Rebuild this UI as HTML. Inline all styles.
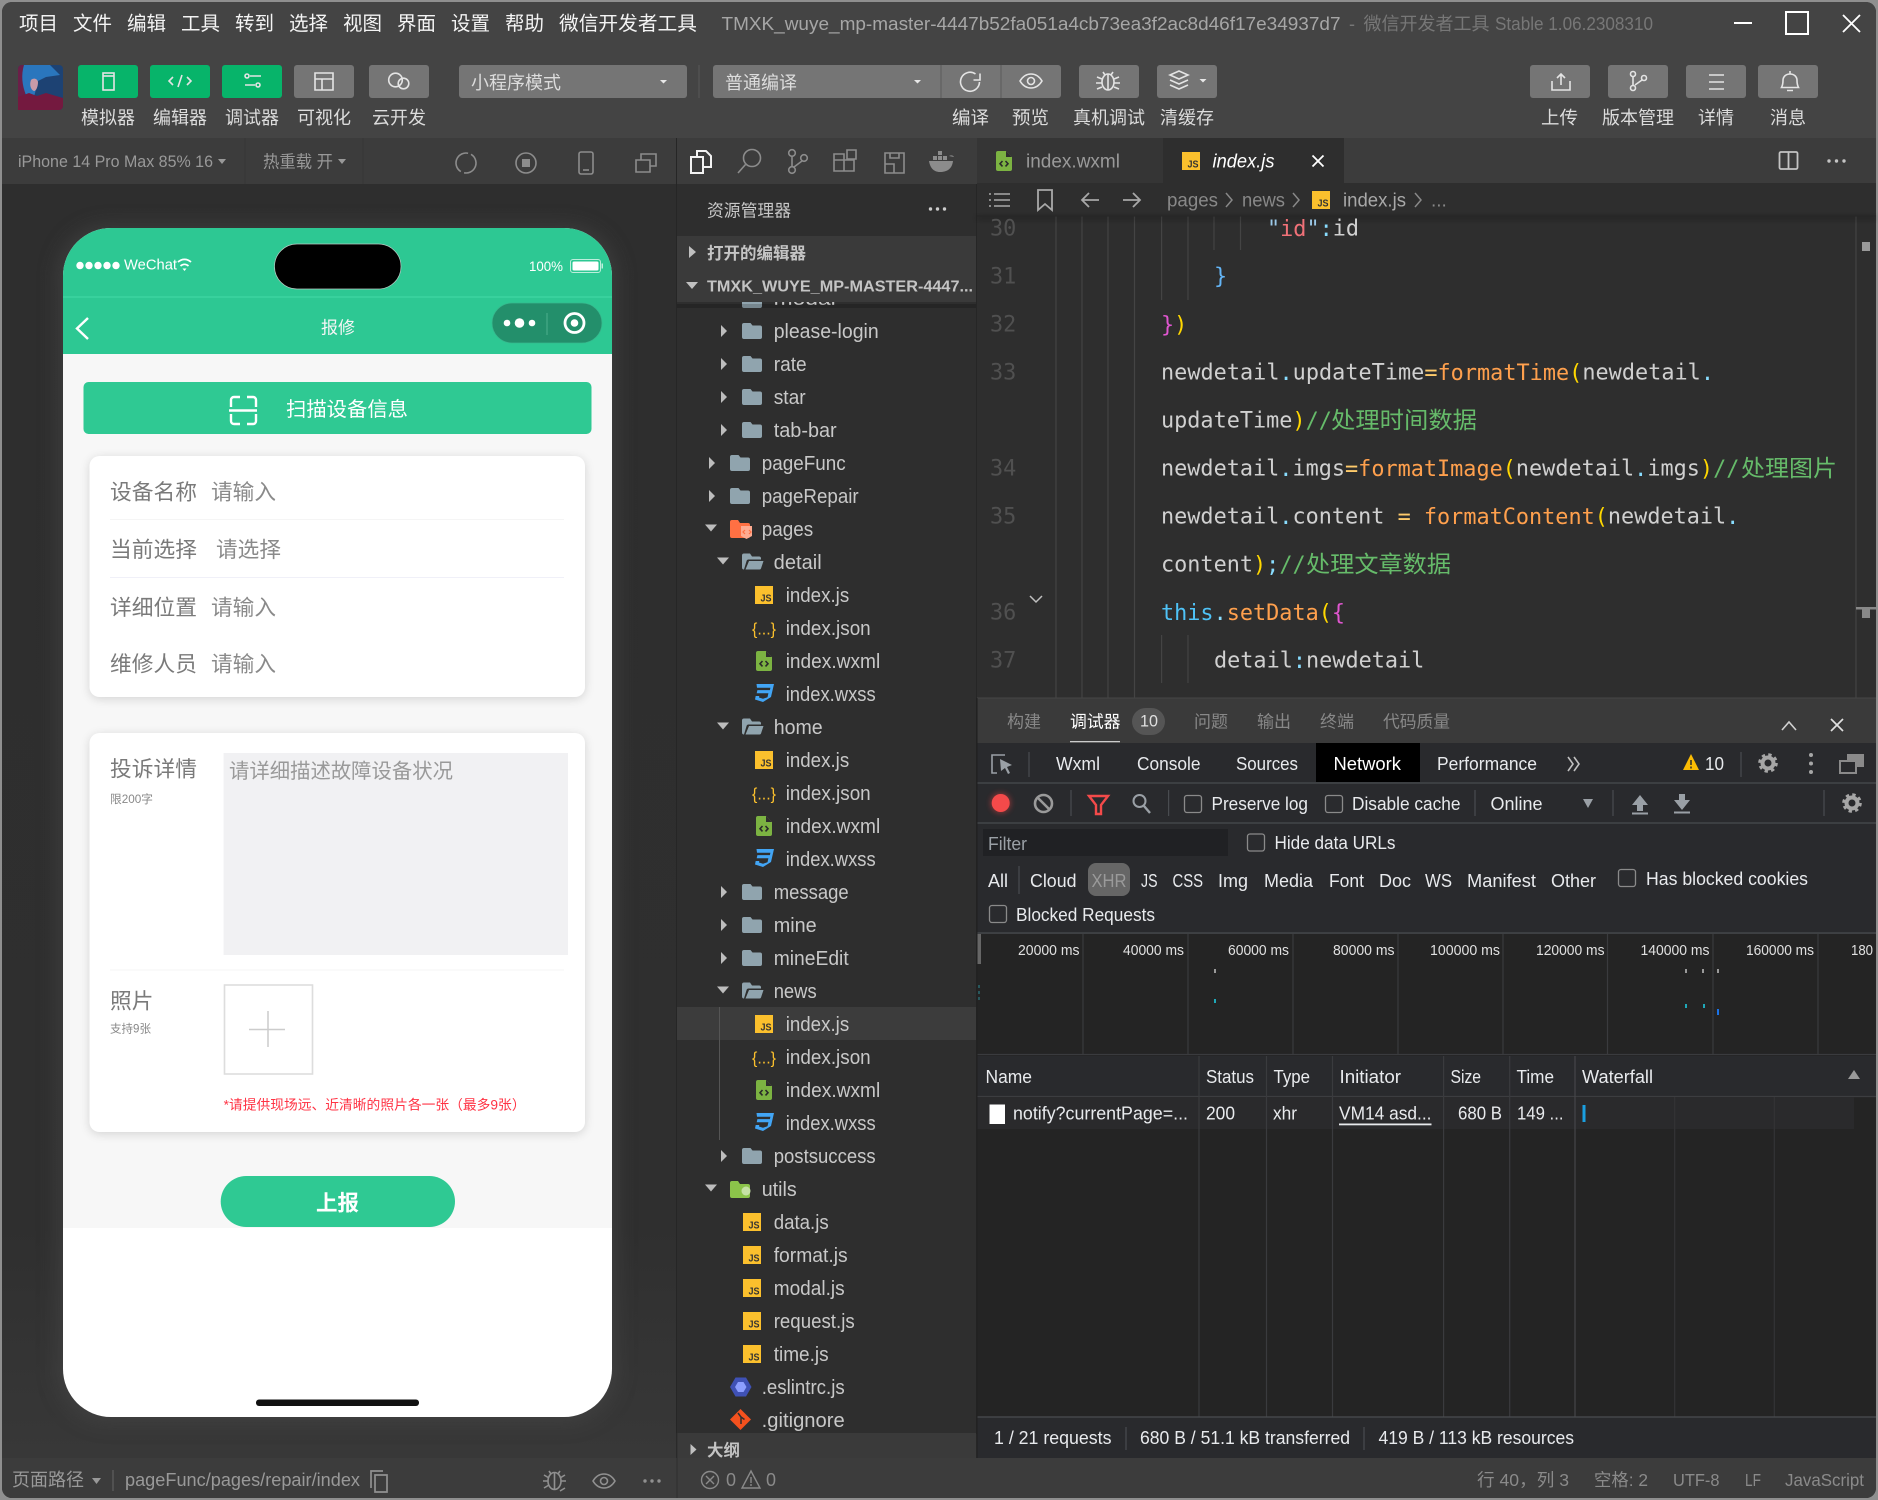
<!DOCTYPE html>
<html lang="zh-CN"><head><meta charset="utf-8"><title>微信开发者工具</title>
<style>
html,body{margin:0;padding:0;background:#8a8a8a;width:1878px;height:1500px;overflow:hidden}
svg{display:block}
text{font-family:"Liberation Sans","Noto Sans CJK SC",sans-serif;dominant-baseline:central;white-space:pre;transform:translateY(1px)}
.n,.n text,.d text{transform:none}
.m{font-family:"DejaVu Sans Mono","Liberation Mono",monospace;font-size:21.83px}
.cm{font-family:"Liberation Sans","Noto Sans CJK SC",sans-serif;font-size:23px;fill:#66bb6a}
.t{font-size:20px;fill:#c8c8c8}
.lb{font-size:18px;fill:#dcdcdc}
.d{font-size:18px;fill:#e8eaed}
.g{fill:none;stroke:#444;stroke-width:1.2}
.ic{fill:none;stroke:#e4e4e4;stroke-width:1.6}
.ig{fill:none;stroke:#8c8c8c;stroke-width:1.6}
.sep{stroke:#494c50;stroke-width:1.2}
.cb{fill:#2a2b2e;stroke:#8a8a8a;stroke-width:1.3}
</style></head><body>
<svg xmlns="http://www.w3.org/2000/svg" width="1878" height="1500" viewBox="0 0 1878 1500">
<defs>
<filter id="b1" x="-20%" y="-20%" width="140%" height="140%"><feGaussianBlur stdDeviation="10"/></filter>
<filter id="b2" x="-20%" y="-20%" width="140%" height="140%"><feGaussianBlur stdDeviation="5"/></filter>
<filter id="b3" x="-80%" y="-80%" width="260%" height="260%"><feGaussianBlur stdDeviation="3"/></filter>
<linearGradient id="simbg" x1="0" y1="0" x2="0" y2="1"><stop offset="0" stop-color="#2e2e2e"/><stop offset=".82" stop-color="#2f2f2f"/><stop offset="1" stop-color="#383838"/></linearGradient>
<g id="js"><rect width="18" height="18" fill="#fbc02d"/><text x="5.500" y="11.500" font-size="10.500" font-weight="700" fill="#333" textLength="11" lengthAdjust="spacingAndGlyphs">JS</text></g>
<g id="fc"><path fill="#90a4ae" d="M2 0h6.500l2 2.500H18a2 2 0 0 1 2 2V14a2 2 0 0 1-2 2H2a2 2 0 0 1-2-2V2a2 2 0 0 1 2-2z"/></g>
<g id="fo"><path fill="#90a4ae" d="M0 2a2 2 0 0 1 2-2h6l2 3h7a2 2 0 0 1 2 2v1H6.500a2 2 0 0 0-1.900 1.400L2 16a2 2 0 0 1-2-2zM7 7.500h14.500L19 15a1.500 1.500 0 0 1-1.400 1H3.500z"/></g>
<g id="wx"><path fill="#7cb342" d="M2 0h8l6 6v12a2 2 0 0 1-2 2H2a2 2 0 0 1-2-2V2a2 2 0 0 1 2-2z"/><path fill="#2e2e2e" d="M10 0l6 6h-6z"/><path fill="none" stroke="#2a2a2a" stroke-width="1.600" d="M6.500 10l-2.500 2.700 2.500 2.700M9.500 10l2.500 2.700-2.500 2.700"/></g>
<g id="ss"><path fill="#42a5f5" d="M2.500 0H20L17 13l-8 5-8-2.500.7-3.500h3.600l-.3 1.500 4 1.300 4.500-1.500.9-4H2.700l.7-3.200h12.500l.5-2.300H3z"/></g>
<g id="gear"><circle r="5.500" fill="none" stroke="#a6a6a6" stroke-width="4"/><circle r="8.300" fill="none" stroke="#a6a6a6" stroke-width="3" stroke-dasharray="3.300 3.220"/></g>
<g id="tr"><path fill="#bdbdbd" d="M-3-6l6 6-6 6z"/></g>
<g id="td"><path fill="#bdbdbd" d="M-6-3.500h12l-6 7z"/></g>
</defs>

<!-- window -->
<rect x="0" y="0" width="1878" height="1500" fill="#8f8f8f"/>
<rect x="2" y="2" width="1874" height="1496" rx="10" fill="#2e2e2e"/>
<path d="M2 138V12A10 10 0 0 1 12 2H1866a10 10 0 0 1 10 10V138z" fill="#444"/>

<!-- menu -->
<g fill="#f4f4f4">
<text x="19" y="23" font-size="19.500" textLength="39" lengthAdjust="spacingAndGlyphs">项目</text>
<text x="73" y="23" font-size="19.500" textLength="39" lengthAdjust="spacingAndGlyphs">文件</text>
<text x="127" y="23" font-size="19.500" textLength="39" lengthAdjust="spacingAndGlyphs">编辑</text>
<text x="181" y="23" font-size="19.500" textLength="39" lengthAdjust="spacingAndGlyphs">工具</text>
<text x="235" y="23" font-size="19.500" textLength="39" lengthAdjust="spacingAndGlyphs">转到</text>
<text x="289" y="23" font-size="19.500" textLength="39" lengthAdjust="spacingAndGlyphs">选择</text>
<text x="343" y="23" font-size="19.500" textLength="39" lengthAdjust="spacingAndGlyphs">视图</text>
<text x="397" y="23" font-size="19.500" textLength="39" lengthAdjust="spacingAndGlyphs">界面</text>
<text x="451" y="23" font-size="19.500" textLength="39" lengthAdjust="spacingAndGlyphs">设置</text>
<text x="505" y="23" font-size="19.500" textLength="39" lengthAdjust="spacingAndGlyphs">帮助</text>
<text x="559" y="23" font-size="19.500" textLength="138" lengthAdjust="spacingAndGlyphs">微信开发者工具</text>
</g>
<text x="721.500" y="23" font-size="18" fill="#a6a6a6" textLength="619" lengthAdjust="spacingAndGlyphs">TMXK_wuye_mp-master-4447b52fa051a4cb73ea3f2ac8d46f17e34937d7</text>
<text x="1349" y="23" font-size="18" fill="#777">-</text>
<text x="1363.500" y="23" font-size="18" fill="#777" textLength="126" lengthAdjust="spacingAndGlyphs">微信开发者工具</text>
<text x="1495" y="23" font-size="18" fill="#777" textLength="158" lengthAdjust="spacingAndGlyphs">Stable 1.06.2308310</text>
<path d="M1734 23h18" stroke="#fff" stroke-width="2"/>
<rect x="1786" y="12" width="22" height="22" fill="none" stroke="#fff" stroke-width="2"/>
<path d="M1843 15l17 17M1860 15l-17 17" stroke="#fff" stroke-width="1.800"/>

<!-- avatar -->
<rect x="18" y="65" width="45" height="45" rx="4" fill="#1d4273"/>
<path d="M18 110V69a4 4 0 0 1 4-4h3v45z" fill="#6b1f48"/>
<path d="M24 65h26l10 10-14 2-8 4-4 16-8-2c-4-10-5-20-2-30z" fill="#2a76bd"/>
<path d="M31 80c2-2 6-2 7 2 0 5-2 9-4 9-3-1-5-6-3-11z" fill="#c99aa8"/>
<path d="M18 110V97l11-4 8 3 9-3 17 5v8a4 4 0 0 1-4 4z" fill="#74193f"/>

<!-- left toolbar buttons -->
<g fill="#07b46a">
<rect x="78" y="65" width="60" height="33" rx="3"/>
<rect x="150" y="65" width="60" height="33" rx="3"/>
<rect x="222" y="65" width="60" height="33" rx="3"/>
</g>
<g fill="#757575">
<rect x="294" y="65" width="60" height="33" rx="3"/>
<rect x="369" y="65" width="60" height="33" rx="3"/>
<rect x="459" y="65" width="228" height="33" rx="3"/>
<rect x="713" y="65" width="348" height="33" rx="3"/>
<rect x="1079" y="65" width="60" height="33" rx="3"/>
<rect x="1157" y="65" width="60" height="33" rx="3"/>
<rect x="1530" y="65" width="60" height="33" rx="3"/>
<rect x="1608" y="65" width="60" height="33" rx="3"/>
<rect x="1686" y="65" width="60" height="33" rx="3"/>
<rect x="1758" y="65" width="60" height="33" rx="3"/>
</g>
<path d="M941 65v33M1001 65v33" stroke="#5c5c5c" stroke-width="1"/>
<path d="M699 65v33" stroke="#575757" stroke-width="1"/>
<!-- icons in buttons -->
<g class="ic">
<rect x="103" y="73" width="11" height="17" fill="none"/><path d="M103 76h11" fill="none"/>
<path d="M173 77l-4 4 4 4M187 77l4 4-4 4M182 75l-4 12" fill="none"/>
<g fill="none"><circle cx="247" cy="76" r="2"/><path d="M250 76h11M245 85h10"/><circle cx="258" cy="85" r="2"/></g>
<path d="M315 73h18v17h-18zM315 79h18M322 79v11" fill="none"/>
<g fill="none"><circle cx="395.500" cy="80" r="6.800"/><circle cx="403.500" cy="83.500" r="5.300"/></g>
<path fill="none" d="M975.500 74a9.500 9.500 0 1 0 4 8M980 73.500v6.500h-6.500"/>
<g fill="none"><path d="M1020 81c3-5 7-7 11-7s8 2 11 7c-3 5-7 7-11 7s-8-2-11-7z"/><circle cx="1031" cy="81" r="3.500"/></g>
<g fill="none"><ellipse cx="1108" cy="82" rx="6" ry="8"/><path d="M1108 74v16M1103 72l2 3M1113 72l-2 3M1097 77l5 2M1119 77l-5 2M1096 83h6M1120 83h-6M1097 89l5-2M1119 89l-5-2"/></g>
<path fill="none" d="M1170 75l9-4 9 4-9 4zM1170 80l9 4 9-4M1170 85l9 4 9-4"/>
<path fill="none" d="M1552 81v9h18v-9M1561 85V74M1557 78l4-4 4 4"/>
<g fill="none"><circle cx="1633" cy="74" r="2.500"/><circle cx="1633" cy="88" r="2.500"/><circle cx="1644" cy="78" r="2.500"/><path d="M1633 76.500v9M1642 80l-7 5"/></g>
<path fill="none" d="M1709 75h15M1709 82h15M1709 89h15"/>
<path fill="none" d="M1781.500 87.500c1-2 1.500-4 1.500-7 0-4 3-6.500 7-6.500s7 2.500 7 6.500c0 3 .5 5 1.500 7zM1790 71v3M1787 90.500h6"/>
</g>
<path d="M660 80h7l-3.500 3.500zM914 80h7l-3.500 3.500z" fill="#e8e8e8"/>
<path d="M1199.500 79h7l-3.500 3.500z" fill="#e8e8e8"/>
<text x="471" y="82" class="lb" textLength="90" lengthAdjust="spacingAndGlyphs">小程序模式</text>
<text x="725" y="82" class="lb" textLength="72" lengthAdjust="spacingAndGlyphs">普通编译</text>

<!-- labels -->
<g class="lb">
<text x="81" y="117" textLength="54" lengthAdjust="spacingAndGlyphs">模拟器</text>
<text x="153" y="117" textLength="54" lengthAdjust="spacingAndGlyphs">编辑器</text>
<text x="225" y="117" textLength="54" lengthAdjust="spacingAndGlyphs">调试器</text>
<text x="297" y="117" textLength="54" lengthAdjust="spacingAndGlyphs">可视化</text>
<text x="372" y="117" textLength="54" lengthAdjust="spacingAndGlyphs">云开发</text>
<text x="952" y="117" textLength="37" lengthAdjust="spacingAndGlyphs">编译</text>
<text x="1012" y="117" textLength="37" lengthAdjust="spacingAndGlyphs">预览</text>
<text x="1073" y="117" textLength="72" lengthAdjust="spacingAndGlyphs">真机调试</text>
<text x="1160" y="117" textLength="54" lengthAdjust="spacingAndGlyphs">清缓存</text>
<text x="1541" y="117" textLength="37" lengthAdjust="spacingAndGlyphs">上传</text>
<text x="1602" y="117" textLength="72" lengthAdjust="spacingAndGlyphs">版本管理</text>
<text x="1698" y="117" textLength="36" lengthAdjust="spacingAndGlyphs">详情</text>
<text x="1770" y="117" textLength="36" lengthAdjust="spacingAndGlyphs">消息</text>
</g>

<!-- simulator -->
<rect x="2" y="184" width="675" height="1274" fill="url(#simbg)"/>
<rect x="2" y="138" width="675" height="46" fill="#3c3c3c"/>
<path d="M245 138v46M363 138v46" stroke="#363636" stroke-width="1"/>
<text x="18" y="161" font-size="16.500" fill="#999" textLength="195" lengthAdjust="spacingAndGlyphs">iPhone 14 Pro Max 85% 16</text>
<path d="M218 159h8l-4 5zM338 159h8l-4 5z" fill="#999"/>
<text x="263" y="161" font-size="17" fill="#999" textLength="70" lengthAdjust="spacingAndGlyphs">热重载 开</text>
<g class="ig">
<circle cx="466" cy="163" r="10" fill="none" stroke-dasharray="27.900 3.500" transform="rotate(-60 466 163)"/>
<circle cx="526" cy="163" r="10" fill="none"/><rect x="522" y="159" width="8" height="8" fill="#8c8c8c" stroke="none"/>
<rect x="579" y="152" width="14" height="22" rx="2" fill="none"/><path d="M583 170h6" fill="none"/>
<path fill="none" d="M636 160h14v12h-14zM641 160v-6h15v12h-6"/>
</g>

<!-- phone -->
<rect x="58" y="226" width="558" height="1196" rx="50" fill="#4a4a4a" opacity=".55" filter="url(#b1)"/>
<rect x="63" y="228" width="549" height="1189" rx="48" fill="#fff"/>
<path d="M63 354V276a48 48 0 0 1 48-48H564a48 48 0 0 1 48 48V354z" fill="#2dc893"/>
<path d="M63 297h549" stroke="#3fd6a3" stroke-width="1.200"/>
<g fill="#fff"><circle cx="80" cy="265.500" r="3.700"/><circle cx="89" cy="265.500" r="3.700"/><circle cx="98" cy="265.500" r="3.700"/><circle cx="107" cy="265.500" r="3.700"/><circle cx="116" cy="265.500" r="3.700"/></g>
<text x="124" y="264" font-size="15" fill="#fff" textLength="53" lengthAdjust="spacingAndGlyphs">WeChat</text>
<path d="M178 262c4-3.500 9-3.500 13 0M180.500 266c2.500-2.200 5.500-2.200 8 0" fill="none" stroke="#fff" stroke-width="1.800"/><path d="M182.500 268.500h4L184.500 271z" fill="#fff"/>
<rect x="274.500" y="244" width="126.500" height="45" rx="22.500" fill="#000" stroke="#b8c9c2" stroke-width=".7"/>
<text x="529" y="265" font-size="14" fill="#fff" textLength="34" lengthAdjust="spacingAndGlyphs">100%</text>
<rect x="570.500" y="259.500" width="30" height="13" rx="2.500" fill="none" stroke="#bdeedc" stroke-width="1"/><rect x="572.500" y="261.500" width="26" height="9" rx="1.500" fill="#fff"/><rect x="601.500" y="263.500" width="1.500" height="5" fill="#bdeedc"/>
<path d="M88 318l-11 10.500L88 339" fill="none" stroke="#fff" stroke-width="2.400"/>
<text x="321" y="327" font-size="17" fill="#f6f6f6" textLength="34" lengthAdjust="spacingAndGlyphs">报修</text>
<rect x="492" y="303" width="110" height="40" rx="20" fill="#238f6b" stroke="#37b88d" stroke-width=".8"/>
<g fill="#fff"><circle cx="507" cy="323" r="3.300"/><circle cx="519.500" cy="323" r="4.800"/><circle cx="532" cy="323" r="3.300"/></g>
<path d="M547 313v22" stroke="#4caf8e" stroke-width="1"/>
<circle cx="574.500" cy="323" r="9.500" fill="none" stroke="#fff" stroke-width="2.800"/><circle cx="574.500" cy="323" r="3.800" fill="#fff"/>
<rect x="63" y="354" width="549" height="874" fill="#f7f7f7"/>
<rect x="83.500" y="382" width="508" height="52" rx="5" fill="#2fc993"/>
<path d="M231 407v-7a3 3 0 0 1 3-3h6M247 397h6a3 3 0 0 1 3 3v7M229 410.500h28M231 414v7a3 3 0 0 0 3 3h6M247 424h6a3 3 0 0 0 3-3v-7" fill="none" stroke="#fff" stroke-width="2.400"/>
<text x="286" y="409" font-size="20" fill="#fff" textLength="122" lengthAdjust="spacingAndGlyphs">扫描设备信息</text>

<rect x="89.500" y="458" width="495.500" height="241" rx="10" fill="#000" opacity=".14" filter="url(#b2)"/>
<rect x="89.500" y="456" width="495.500" height="241" rx="10" fill="#fff"/>
<g class="n" font-size="21.600" fill="#7a7a7a">
<text x="110" y="492" textLength="87" lengthAdjust="spacingAndGlyphs">设备名称</text>
<text x="110" y="549.500" textLength="87" lengthAdjust="spacingAndGlyphs">当前选择</text>
<text x="110" y="607.500" textLength="87" lengthAdjust="spacingAndGlyphs">详细位置</text>
<text x="110" y="664" textLength="87" lengthAdjust="spacingAndGlyphs">维修人员</text>
</g>
<g class="n" font-size="21.600" fill="#8a8a8a">
<text x="211" y="492" textLength="65" lengthAdjust="spacingAndGlyphs">请输入</text>
<text x="216" y="549.500" textLength="65" lengthAdjust="spacingAndGlyphs">请选择</text>
<text x="211" y="607.500" textLength="65" lengthAdjust="spacingAndGlyphs">请输入</text>
<text x="211" y="664" textLength="65" lengthAdjust="spacingAndGlyphs">请输入</text>
</g>
<path d="M110 519.500h454" stroke="#f5f5f5" stroke-width="1"/><path d="M110 577.500h454" stroke="#f0f0f8" stroke-width="1"/>

<rect x="89.500" y="735" width="495.500" height="399" rx="10" fill="#000" opacity=".14" filter="url(#b2)"/>
<rect x="89.500" y="733" width="495.500" height="399" rx="10" fill="#fff"/>
<text x="110" y="768" font-size="21.600" fill="#7a7a7a" textLength="87" lengthAdjust="spacingAndGlyphs">投诉详情</text>
<text x="110" y="799" font-size="11.500" fill="#888" textLength="43" lengthAdjust="spacingAndGlyphs">限200字</text>
<rect x="223.600" y="753" width="344.400" height="202" fill="#f1f1f3"/>
<text x="229" y="771" font-size="20.400" fill="#999" textLength="224" lengthAdjust="spacingAndGlyphs">请详细描述故障设备状况</text>
<path d="M110 970h454" stroke="#f5f5f5" stroke-width="1"/>
<text x="110" y="1000" font-size="21.600" fill="#7a7a7a" textLength="43.500" lengthAdjust="spacingAndGlyphs">照片</text>
<text x="110" y="1028.500" font-size="11.500" fill="#888" textLength="41" lengthAdjust="spacingAndGlyphs">支持9张</text>
<rect x="224.500" y="985" width="88" height="89" fill="#fff" stroke="#ddd" stroke-width="1.600"/>
<path d="M249 1029.500h36M268 1011v36" stroke="#ccc" stroke-width="1.500"/>
<text x="223.600" y="1104" font-size="13.600" fill="#ff3344" textLength="302" lengthAdjust="spacingAndGlyphs">*请提供现场远、近清晰的照片各一张（最多9张）</text>
<rect x="220.700" y="1176" width="234.300" height="51" rx="25.500" fill="#2fc993"/>
<text x="316" y="1202" font-size="21.600" font-weight="700" fill="#fff" textLength="43" lengthAdjust="spacingAndGlyphs">上报</text>
<rect x="256" y="1399.500" width="163" height="6.500" rx="3" fill="#111"/>

<!-- activity row -->
<rect x="677" y="138" width="300" height="46" fill="#3c3c3c"/>
<path d="M691 157h12v16h-12zM697 157v-6h9l5 5v11h-8" fill="none" stroke="#f2f2f2" stroke-width="2"/>
<g class="ig" stroke-width="1.800">
<circle cx="752" cy="158" r="8.500" fill="none"/><path d="M745.500 164.500l-7.500 8.500" fill="none"/>
<g fill="none"><circle cx="792" cy="153" r="3.300"/><circle cx="792" cy="170" r="3.300"/><circle cx="804" cy="158" r="3.300"/><path d="M792 156.500v10M802 161l-8 6"/></g>
<path fill="none" d="M834 160h10v11h-10zM844 160h10v11h-10zM834 160v-6h10v6M847 150h9v9h-9z"/>
<path fill="none" d="M885 153h19v20h-19zM885 164h9v9M890 153v5h9v-5"/>
</g>
<path d="M929 161h24c-1 8-6 11-13 11s-10-5-11-11z" fill="#8c8c8c"/><path d="M933 156h4v4h-4zM938 156h4v4h-4zM943 156h4v4h-4zM938 151h4v4h-4zM949 156c2-1 4-1 5 1" fill="#8c8c8c"/>

<!-- explorer -->
<rect x="677" y="184" width="300" height="1274" fill="#2e2e2e"/>
<path d="M676.500 138v1320" stroke="#262626" stroke-width="1"/>
<path d="M976.500 184v1250" stroke="#262626" stroke-width="1"/>
<text x="707" y="210" font-size="17" fill="#c8c8c8" textLength="84" lengthAdjust="spacingAndGlyphs">资源管理器</text>
<g fill="#ccc"><circle cx="930.500" cy="209" r="1.700"/><circle cx="937.500" cy="209" r="1.700"/><circle cx="944.500" cy="209" r="1.700"/></g>

<rect x="677" y="1007" width="299" height="33" fill="#3c3c3c"/>
<path d="M719.500 1007v133" stroke="#555" stroke-width="1"/>

<!-- tree rows -->
<use href="#fc" x="742" y="292"/><text x="773.700" y="298" class="t" textLength="62" lengthAdjust="spacingAndGlyphs">modal</text>
<use href="#tr" x="724" y="331"/><use href="#fc" x="742" y="323"/><text x="773.700" y="331" class="t" textLength="105" lengthAdjust="spacingAndGlyphs">please-login</text>
<use href="#tr" x="724" y="364"/><use href="#fc" x="742" y="356"/><text x="773.700" y="364" class="t" textLength="33" lengthAdjust="spacingAndGlyphs">rate</text>
<use href="#tr" x="724" y="397"/><use href="#fc" x="742" y="389"/><text x="773.700" y="397" class="t" textLength="32" lengthAdjust="spacingAndGlyphs">star</text>
<use href="#tr" x="724" y="430"/><use href="#fc" x="742" y="422"/><text x="773.700" y="430" class="t" textLength="63" lengthAdjust="spacingAndGlyphs">tab-bar</text>
<use href="#tr" x="712" y="463"/><use href="#fc" x="730" y="455"/><text x="761.700" y="463" class="t" textLength="84" lengthAdjust="spacingAndGlyphs">pageFunc</text>
<use href="#tr" x="712" y="496"/><use href="#fc" x="730" y="488"/><text x="761.700" y="496" class="t" textLength="97" lengthAdjust="spacingAndGlyphs">pageRepair</text>
<use href="#td" x="711" y="528"/>
<path fill="#ff7043" d="M730 522a2 2 0 0 1 2-2h6l2 3h8a2 2 0 0 1 2 2v11a2 2 0 0 1-2 2h-16a2 2 0 0 1-2-2z"/><path fill="#ffab91" d="M741 526h11v10l-5.500 3-5.500-3z"/><path fill="none" stroke="#ff7043" stroke-width="1.200" d="M745 530l-2 2 2 2M749 530l2 2-2 2"/>
<text x="761.700" y="529" class="t" textLength="51.500" lengthAdjust="spacingAndGlyphs">pages</text>

<use href="#td" x="723" y="561"/><use href="#fo" x="742" y="553.500"/><text x="773.700" y="562" class="t" textLength="48" lengthAdjust="spacingAndGlyphs">detail</text>
<use href="#js" x="755" y="586"/><text x="785.700" y="595" class="t" textLength="63.500" lengthAdjust="spacingAndGlyphs">index.js</text>
<text x="752" y="628" font-size="17" fill="#fbc02d" textLength="24" lengthAdjust="spacingAndGlyphs">{...}</text><text x="785.700" y="628" class="t" textLength="85" lengthAdjust="spacingAndGlyphs">index.json</text>
<use href="#wx" x="756" y="651"/><text x="785.700" y="661" class="t" textLength="94.500" lengthAdjust="spacingAndGlyphs">index.wxml</text>
<use href="#ss" x="754" y="684"/><text x="785.700" y="694" class="t" textLength="90" lengthAdjust="spacingAndGlyphs">index.wxss</text>

<use href="#td" x="723" y="726"/><use href="#fo" x="742" y="718.500"/><text x="773.700" y="727" class="t" textLength="49" lengthAdjust="spacingAndGlyphs">home</text>
<use href="#js" x="755" y="751"/><text x="785.700" y="760" class="t" textLength="63.500" lengthAdjust="spacingAndGlyphs">index.js</text>
<text x="752" y="793" font-size="17" fill="#fbc02d" textLength="24" lengthAdjust="spacingAndGlyphs">{...}</text><text x="785.700" y="793" class="t" textLength="85" lengthAdjust="spacingAndGlyphs">index.json</text>
<use href="#wx" x="756" y="816"/><text x="785.700" y="826" class="t" textLength="94.500" lengthAdjust="spacingAndGlyphs">index.wxml</text>
<use href="#ss" x="754" y="849"/><text x="785.700" y="859" class="t" textLength="90" lengthAdjust="spacingAndGlyphs">index.wxss</text>

<use href="#tr" x="724" y="892"/><use href="#fc" x="742" y="884"/><text x="773.700" y="892" class="t" textLength="75" lengthAdjust="spacingAndGlyphs">message</text>
<use href="#tr" x="724" y="925"/><use href="#fc" x="742" y="917"/><text x="773.700" y="925" class="t" textLength="43" lengthAdjust="spacingAndGlyphs">mine</text>
<use href="#tr" x="724" y="958"/><use href="#fc" x="742" y="950"/><text x="773.700" y="958" class="t" textLength="75" lengthAdjust="spacingAndGlyphs">mineEdit</text>
<use href="#td" x="723" y="990"/><use href="#fo" x="742" y="982.500"/><text x="773.700" y="991" class="t" textLength="43" lengthAdjust="spacingAndGlyphs">news</text>
<use href="#js" x="755" y="1015"/><text x="785.700" y="1024" class="t" textLength="63.500" lengthAdjust="spacingAndGlyphs">index.js</text>
<text x="752" y="1057" font-size="17" fill="#fbc02d" textLength="24" lengthAdjust="spacingAndGlyphs">{...}</text><text x="785.700" y="1057" class="t" textLength="85" lengthAdjust="spacingAndGlyphs">index.json</text>
<use href="#wx" x="756" y="1080"/><text x="785.700" y="1090" class="t" textLength="94.500" lengthAdjust="spacingAndGlyphs">index.wxml</text>
<use href="#ss" x="754" y="1113"/><text x="785.700" y="1123" class="t" textLength="90" lengthAdjust="spacingAndGlyphs">index.wxss</text>
<use href="#tr" x="724" y="1156"/><use href="#fc" x="742" y="1148"/><text x="773.700" y="1156" class="t" textLength="102" lengthAdjust="spacingAndGlyphs">postsuccess</text>

<use href="#td" x="711" y="1188"/>
<path fill="#8bc34a" d="M730 1183a2 2 0 0 1 2-2h6l2 3h8a2 2 0 0 1 2 2v10a2 2 0 0 1-2 2h-16a2 2 0 0 1-2-2z"/><circle cx="746" cy="1191" r="4.500" fill="#c5e1a5"/>
<text x="761.700" y="1189" class="t" textLength="35" lengthAdjust="spacingAndGlyphs">utils</text>
<use href="#js" x="743" y="1213"/><text x="773.700" y="1222" class="t" textLength="55" lengthAdjust="spacingAndGlyphs">data.js</text>
<use href="#js" x="743" y="1246"/><text x="773.700" y="1255" class="t" textLength="74" lengthAdjust="spacingAndGlyphs">format.js</text>
<use href="#js" x="743" y="1279"/><text x="773.700" y="1288" class="t" textLength="71" lengthAdjust="spacingAndGlyphs">modal.js</text>
<use href="#js" x="743" y="1312"/><text x="773.700" y="1321" class="t" textLength="81" lengthAdjust="spacingAndGlyphs">request.js</text>
<use href="#js" x="743" y="1345"/><text x="773.700" y="1354" class="t" textLength="55" lengthAdjust="spacingAndGlyphs">time.js</text>
<path fill="#3f51b5" d="M730 1387l5.500-9.500h10.500l5.500 9.500-5.500 9.500h-10.500z"/><path fill="#8c9eff" d="M735 1387l3-5h5.500l3 5-3 5h-5.500z"/>
<text x="761.700" y="1387" class="t" textLength="83" lengthAdjust="spacingAndGlyphs">.eslintrc.js</text>
<path fill="#f4511e" d="M740.500 1409l10.500 10.500-10.500 10.500-10.500-10.500z"/><path fill="none" stroke="#2e2e2e" stroke-width="1.500" d="M738 1413l3 4v7M741 1417l3.500 2.500"/>
<text x="761.700" y="1420" class="t" textLength="83" lengthAdjust="spacingAndGlyphs">.gitignore</text>

<!-- explorer sections (over tree) -->
<rect x="677" y="304" width="299" height="4" fill="#000" opacity=".18"/>
<rect x="677" y="236" width="299" height="34" fill="#3a3a3a"/>
<rect x="677" y="270" width="299" height="32" fill="#3a3a3a"/>
<path d="M689 246l7 6-7 6z" fill="#c0c0c0"/><path d="M686 282h12l-6 7z" fill="#c0c0c0"/>
<text x="707" y="253" font-size="16.500" font-weight="700" fill="#c4c4c4" textLength="99" lengthAdjust="spacingAndGlyphs">打开的编辑器</text>
<text x="707" y="286" font-size="16" font-weight="700" fill="#c4c4c4" textLength="266" lengthAdjust="spacingAndGlyphs">TMXK_WUYE_MP-MASTER-4447...</text>
<rect x="677" y="1433" width="299" height="25" fill="#3a3a3a"/>
<path d="M690.500 1444l6 5.500-6 5.500z" fill="#c0c0c0"/>
<text x="707" y="1450" font-size="16.500" font-weight="700" fill="#c4c4c4" textLength="33" lengthAdjust="spacingAndGlyphs">大纲</text>

<!-- editor tabs -->
<rect x="977" y="138" width="899" height="45" fill="#3c3c3c"/>
<rect x="977" y="138" width="186" height="45" fill="#353535"/>
<rect x="1163" y="138" width="181" height="45" fill="#2e2e2e"/>
<use href="#wx" transform="translate(996,151)"/>
<text x="1026" y="161" font-size="19" fill="#999" textLength="94" lengthAdjust="spacingAndGlyphs">index.wxml</text>
<use href="#js" x="1182" y="152"/>
<text x="1212.500" y="161" font-size="19" font-style="italic" fill="#fff" textLength="62" lengthAdjust="spacingAndGlyphs">index.js</text>
<path d="M1312.500 155.500l11 11M1323.500 155.500l-11 11" stroke="#fff" stroke-width="1.800"/>
<rect x="1779.500" y="152" width="18" height="17" rx="1.500" fill="none" stroke="#c4c4c4" stroke-width="1.800"/><path d="M1788.500 152v17" stroke="#c4c4c4" stroke-width="1.800"/>
<g fill="#c4c4c4"><circle cx="1829" cy="161" r="1.700"/><circle cx="1836.500" cy="161" r="1.700"/><circle cx="1844" cy="161" r="1.700"/></g>

<!-- code area -->
<rect x="977" y="183" width="899" height="515" fill="#2e2e2e"/>
<path d="M1056 216v482M1082 216v482M1108 216v482M1134.500 216v482M1161.600 216v84M1188 216v84M1214 216v34M1240.500 216v34M1161.600 635v48M1188 635v48M1856 216v482" class="g"/>
<rect x="977" y="183" width="899" height="33" fill="#2e2e2e"/>
<rect x="977" y="216" width="899" height="4" fill="#000" opacity=".22" filter="url(#b3)"/>
<path d="M977 216h899" stroke="#252525" stroke-width="1"/>
<!-- breadcrumbs -->
<g>
<path fill="none" stroke="#a8a8a8" stroke-width="1.600" d="M994 194h16M994 200h16M994 206h16M989 194h2M989 200h2M989 206h2"/>
<path fill="none" stroke="#a8a8a8" stroke-width="1.800" d="M1038 190h14v20l-7-6-7 6z"/>
<path fill="none" stroke="#a8a8a8" stroke-width="1.800" d="M1099 200h-17M1089 193l-7 7 7 7M1123 200h17M1133 193l7 7-7 7"/>
</g>
<text x="1167" y="200" font-size="19" fill="#888" textLength="51" lengthAdjust="spacingAndGlyphs">pages</text>
<path d="M1226 193l6 7-6 7M1293 193l6 7-6 7M1415 193l6 7-6 7" fill="none" stroke="#888" stroke-width="1.500"/>
<text x="1242" y="200" font-size="19" fill="#888" textLength="43" lengthAdjust="spacingAndGlyphs">news</text>
<use href="#js" x="1312" y="191"/>
<text x="1343" y="200" font-size="19" fill="#a8a8a8" textLength="63" lengthAdjust="spacingAndGlyphs">index.js</text>
<text x="1431" y="200" font-size="19" fill="#888">...</text>

<g fill="#505050">
<text class="m" x="990" y="228">30</text><text class="m" x="990" y="276">31</text><text class="m" x="990" y="324">32</text><text class="m" x="990" y="372">33</text><text class="m" x="990" y="468">34</text><text class="m" x="990" y="516">35</text><text class="m" x="990" y="612">36</text><text class="m" x="990" y="660">37</text>
</g>
<path d="M1030 596l6 6 6-6" fill="none" stroke="#c0c0c0" stroke-width="1.500"/>
<g fill="#d0d0d0">
<text class="m" x="1267" y="228"><tspan fill="#9cc9e8">"</tspan><tspan fill="#f07178">id</tspan><tspan fill="#9cc9e8">"</tspan><tspan fill="#89ddff">:</tspan>id</text>
<text class="m" x="1214" y="276" fill="#64b5f6">}</text>
<text class="m" x="1161" y="324"><tspan fill="#e056d0">}</tspan><tspan fill="#ffd700">)</tspan></text>
<text class="m" x="1161" y="372" textLength="553" lengthAdjust="spacing">newdetail<tspan fill="#89ddff">.</tspan>updateTime<tspan fill="#ffcb6b">=</tspan><tspan fill="#ffa04d">formatTime</tspan><tspan fill="#ffd700">(</tspan>newdetail<tspan fill="#89ddff">.</tspan></text>
<text class="m" x="1161" y="420">updateTime<tspan fill="#ffd700">)</tspan><tspan fill="#66bb6a">//</tspan></text>
<text class="cm" x="1331" y="419" textLength="146" lengthAdjust="spacingAndGlyphs">处理时间数据</text>
<text class="m" x="1161" y="468">newdetail<tspan fill="#89ddff">.</tspan>imgs<tspan fill="#ffcb6b">=</tspan><tspan fill="#ffa04d">formatImage</tspan><tspan fill="#ffd700">(</tspan>newdetail<tspan fill="#89ddff">.</tspan>imgs<tspan fill="#ffd700">)</tspan><tspan fill="#66bb6a">//</tspan></text>
<text class="cm" x="1741" y="467" textLength="96" lengthAdjust="spacingAndGlyphs">处理图片</text>
<text class="m" x="1161" y="516">newdetail<tspan fill="#89ddff">.</tspan>content <tspan fill="#ffcb6b">=</tspan> <tspan fill="#ffa04d">formatContent</tspan><tspan fill="#ffd700">(</tspan>newdetail<tspan fill="#89ddff">.</tspan></text>
<text class="m" x="1161" y="564">content<tspan fill="#ffd700">)</tspan><tspan fill="#89ddff">;</tspan><tspan fill="#66bb6a">//</tspan></text>
<text class="cm" x="1306" y="563" textLength="145" lengthAdjust="spacingAndGlyphs">处理文章数据</text>
<text class="m" x="1161" y="612"><tspan fill="#4fc3f7">this</tspan><tspan fill="#89ddff">.</tspan><tspan fill="#ffa04d">setData</tspan><tspan fill="#ffd700">(</tspan><tspan fill="#e056d0">{</tspan></text>
<text class="m" x="1214" y="660">detail<tspan fill="#89ddff">:</tspan>newdetail</text>
</g>
<rect x="1862" y="242" width="8" height="9" fill="#999"/>
<rect x="1856" y="607" width="20" height="2.500" fill="#888"/><rect x="1862" y="609" width="8" height="9" fill="#888"/>

<!-- bottom panel tabs -->
<rect x="977" y="698" width="899" height="45" fill="#3a3a3a"/>
<path d="M977 698h899" stroke="#454545" stroke-width="1"/>
<g class="n" font-size="17" fill="#888">
<text x="1007" y="722" textLength="34" lengthAdjust="spacingAndGlyphs">构建</text>
<text x="1194" y="722" textLength="34" lengthAdjust="spacingAndGlyphs">问题</text>
<text x="1257" y="722" textLength="34" lengthAdjust="spacingAndGlyphs">输出</text>
<text x="1320" y="722" textLength="34" lengthAdjust="spacingAndGlyphs">终端</text>
<text x="1383" y="722" textLength="67" lengthAdjust="spacingAndGlyphs">代码质量</text>
</g>
<text class="n" x="1070" y="722" font-size="17" fill="#fff" textLength="50.500" lengthAdjust="spacingAndGlyphs">调试器</text>
<path d="M1070 741.700h50" stroke="#e0e0e0" stroke-width="1.200"/>
<rect x="1132" y="708" width="33" height="27" rx="13.500" fill="#555"/>
<text class="n" x="1140" y="721" font-size="17" fill="#e0e0e0" textLength="18" lengthAdjust="spacingAndGlyphs">10</text>
<path d="M1782 730l7-8 7 8" fill="none" stroke="#d0d0d0" stroke-width="1.600"/>
<path d="M1831 719l12 12M1843 719l-12 12" stroke="#e0e0e0" stroke-width="1.700"/>

<!-- devtools -->
<rect x="977" y="743" width="899" height="190" fill="#292a2d"/>
<rect x="1316" y="743" width="104" height="39" fill="#000"/>
<path d="M977 783h899M977 823h899M977 933h899" class="sep" stroke="#4a4c50"/>
<path d="M1029 752v25M1071 790v26M1168.600 790v26M1475 790v26M1613 790v26M1824 790v26M1741 752v25M1019 866v28" class="sep" stroke="#4a4c50"/>
<path d="M1005 755h-13v18h5" fill="none" stroke="#9aa0a6" stroke-width="1.600"/><path d="M1000 759l12 6-5 2 3 6-2 1-3-6-4 3z" fill="#9aa0a6"/>
<g class="d">
<text x="1056" y="764" textLength="44" lengthAdjust="spacingAndGlyphs">Wxml</text>
<text x="1137" y="764" textLength="63.500" lengthAdjust="spacingAndGlyphs">Console</text>
<text x="1236" y="764" textLength="62" lengthAdjust="spacingAndGlyphs">Sources</text>
<text x="1333.500" y="764" textLength="67.500" lengthAdjust="spacingAndGlyphs" fill="#fff">Network</text>
<text x="1437" y="764" textLength="100" lengthAdjust="spacingAndGlyphs">Performance</text>
<text x="1705" y="764" textLength="19" lengthAdjust="spacingAndGlyphs">10</text>
<text x="1211.500" y="804" textLength="96.500" lengthAdjust="spacingAndGlyphs">Preserve log</text>
<text x="1352" y="804" textLength="108.500" lengthAdjust="spacingAndGlyphs">Disable cache</text>
<text x="1490.500" y="804" textLength="52" lengthAdjust="spacingAndGlyphs">Online</text>
<text x="1274.500" y="843" textLength="121" lengthAdjust="spacingAndGlyphs">Hide data URLs</text>
<text x="988" y="881" textLength="20" lengthAdjust="spacingAndGlyphs">All</text>
<text x="1030" y="881" textLength="46.500" lengthAdjust="spacingAndGlyphs">Cloud</text>
<text x="1141" y="881" textLength="16.500" lengthAdjust="spacingAndGlyphs">JS</text>
<text x="1172.500" y="881" textLength="30.500" lengthAdjust="spacingAndGlyphs">CSS</text>
<text x="1218" y="881" textLength="30" lengthAdjust="spacingAndGlyphs">Img</text>
<text x="1264" y="881" textLength="49" lengthAdjust="spacingAndGlyphs">Media</text>
<text x="1329" y="881" textLength="35" lengthAdjust="spacingAndGlyphs">Font</text>
<text x="1379" y="881" textLength="32" lengthAdjust="spacingAndGlyphs">Doc</text>
<text x="1425" y="881" textLength="27" lengthAdjust="spacingAndGlyphs">WS</text>
<text x="1467" y="881" textLength="69" lengthAdjust="spacingAndGlyphs">Manifest</text>
<text x="1551" y="881" textLength="45" lengthAdjust="spacingAndGlyphs">Other</text>
<text x="1646" y="879" textLength="162" lengthAdjust="spacingAndGlyphs">Has blocked cookies</text>
<text x="1016" y="915" textLength="139" lengthAdjust="spacingAndGlyphs">Blocked Requests</text>
</g>
<path d="M1568 757l5 7-5 7M1574 757l5 7-5 7" fill="none" stroke="#c0c0c0" stroke-width="1.600"/>
<path d="M1691 754l8 16h-16z" fill="#fbbc04"/><path d="M1691 760v5M1691 766.500v2" stroke="#292a2d" stroke-width="1.500"/>
<use href="#gear" x="1768" y="763"/>
<g fill="#a6a6a6"><circle cx="1811" cy="755" r="2"/><circle cx="1811" cy="763.500" r="2"/><circle cx="1811" cy="772" r="2"/></g>
<rect x="1847" y="754" width="17" height="13" fill="#8a8a8a"/><path d="M1840 761h16v12h-16z" fill="#292a2d" stroke="#8a8a8a" stroke-width="2"/>
<circle cx="1000.700" cy="803" r="10" fill="#f44" opacity=".45" filter="url(#b3)"/>
<circle cx="1000.700" cy="803" r="9" fill="#f44a4a"/>
<circle cx="1043.500" cy="803.500" r="8.500" fill="none" stroke="#9a9a9a" stroke-width="2.600"/><path d="M1037.500 797.500l12 12" stroke="#9a9a9a" stroke-width="2.600"/>
<path d="M1089 796h19l-7 9v9h-5v-9z" fill="none" stroke="#f44a4a" stroke-width="2.400"/>
<circle cx="1139.500" cy="801" r="6" fill="none" stroke="#9aa0a6" stroke-width="2"/><path d="M1144 806l6 7" stroke="#9aa0a6" stroke-width="2.400"/>
<rect x="1184.500" y="795.500" width="17" height="17" rx="2.500" class="cb"/>
<rect x="1325.500" y="795.500" width="17" height="17" rx="2.500" class="cb"/>
<path d="M1583 799h10l-5 9z" fill="#9aa0a6"/>
<path d="M1640 795l8 10h-5v6h-6v-6h-5zM1632 812.500h16v2h-16z" fill="#9aa0a6"/>
<path d="M1682 811l-8-10h5v-6h6v6h5zM1674 812.500h16v2h-16z" fill="#9aa0a6" transform="translate(0,-1)"/>
<use href="#gear" x="1852" y="803"/>
<rect x="983" y="829" width="245" height="27" fill="#202124"/>
<text class="n" x="988" y="844" font-size="18" fill="#9aa0a6" textLength="39" lengthAdjust="spacingAndGlyphs">Filter</text>
<rect x="1247.500" y="834" width="17" height="17" rx="2.500" class="cb"/>
<rect x="1088" y="863" width="42" height="33" rx="8" fill="#666"/>
<text class="n" x="1091.500" y="881" font-size="18" fill="#9a9a9a" textLength="35" lengthAdjust="spacingAndGlyphs">XHR</text>
<rect x="1618.500" y="869.500" width="17" height="17" rx="2.500" class="cb"/>
<rect x="989.500" y="905.500" width="17" height="17" rx="2.500" class="cb"/>

<!-- timeline -->
<rect x="977" y="934" width="899" height="483" fill="#242424"/>
<rect x="977" y="934" width="4" height="30" fill="#666"/>
<path d="M979 985v16" stroke="#2a6a70" stroke-width="1.500" stroke-dasharray="3 3"/>
<path d="M1083 934v120M1188 934v120M1293 934v120M1398 934v120M1503 934v120M1607.500 934v120M1713 934v120M1818 934v120" stroke="#3a3b3e" stroke-width="1.200"/>
<g class="n" font-size="14.500" fill="#e0e0e0">
<text x="1018" y="951" textLength="61.500" lengthAdjust="spacingAndGlyphs">20000 ms</text>
<text x="1123" y="951" textLength="61" lengthAdjust="spacingAndGlyphs">40000 ms</text>
<text x="1228" y="951" textLength="61" lengthAdjust="spacingAndGlyphs">60000 ms</text>
<text x="1333" y="951" textLength="61.500" lengthAdjust="spacingAndGlyphs">80000 ms</text>
<text x="1430" y="951" textLength="70" lengthAdjust="spacingAndGlyphs">100000 ms</text>
<text x="1536" y="951" textLength="68.500" lengthAdjust="spacingAndGlyphs">120000 ms</text>
<text x="1640.500" y="951" textLength="69" lengthAdjust="spacingAndGlyphs">140000 ms</text>
<text x="1746" y="951" textLength="68" lengthAdjust="spacingAndGlyphs">160000 ms</text>
<text x="1851" y="951" textLength="22" lengthAdjust="spacingAndGlyphs">180</text>
</g>
<g fill="#9a9a9a"><rect x="1214" y="969" width="2" height="4"/><rect x="1685" y="969" width="2" height="4"/><rect x="1702" y="969" width="2" height="4"/><rect x="1717" y="969" width="2" height="4"/></g>
<g fill="#1fa8b8"><rect x="1214" y="999" width="2" height="4"/><rect x="1685" y="1004" width="2" height="4"/><rect x="1703" y="1004" width="2" height="4"/></g><rect x="1717" y="1009" width="2" height="6" fill="#1a73e8"/>
<path d="M977 1054.500h899" stroke="#3a3b3e" stroke-width="1.200"/>

<!-- table -->
<rect x="977" y="1056" width="899" height="40" fill="#292a2d"/>
<path d="M977 1096.500h899" stroke="#3c3d40" stroke-width="1.200"/>
<rect x="977" y="1097" width="877" height="32" fill="#2a2a2c"/>
<path d="M1199 1056v361M1266.500 1056v361M1332.500 1056v361M1443.600 1056v361M1509.700 1056v361" stroke="#3a3b3e" stroke-width="1.200"/>
<path d="M1575 1056v361" stroke="#454649" stroke-width="1.200"/>
<path d="M1674.700 1097v320M1774.300 1097v320" stroke="#333436" stroke-width="1.200"/>
<rect x="977" y="1417" width="899" height="41" fill="#292a2d"/>
<path d="M977 1417h899" stroke="#4a4c50" stroke-width="1.200"/>
<path d="M1126 1427v23M1364 1427v23" class="sep"/>
<g class="d">
<text x="985.500" y="1077" textLength="46.500" lengthAdjust="spacingAndGlyphs">Name</text>
<text x="1206" y="1077" textLength="48" lengthAdjust="spacingAndGlyphs">Status</text>
<text x="1273.500" y="1077" textLength="36.500" lengthAdjust="spacingAndGlyphs">Type</text>
<text x="1339.500" y="1077" textLength="61.500" lengthAdjust="spacingAndGlyphs">Initiator</text>
<text x="1450.500" y="1077" textLength="30.500" lengthAdjust="spacingAndGlyphs">Size</text>
<text x="1516.500" y="1077" textLength="37.500" lengthAdjust="spacingAndGlyphs">Time</text>
<text x="1582" y="1077" textLength="71" lengthAdjust="spacingAndGlyphs">Waterfall</text>
<text x="1013" y="1113.500" textLength="175" lengthAdjust="spacingAndGlyphs">notify?currentPage=...</text>
<text x="1206" y="1113.500" textLength="29" lengthAdjust="spacingAndGlyphs">200</text>
<text x="1273" y="1113.500" textLength="24" lengthAdjust="spacingAndGlyphs">xhr</text>
<text x="1339" y="1113.500" textLength="92.500" lengthAdjust="spacingAndGlyphs" text-decoration="underline">VM14 asd...</text>
<text x="1458" y="1113.500" textLength="44" lengthAdjust="spacingAndGlyphs">680 B</text>
<text x="1517" y="1113.500" textLength="46.500" lengthAdjust="spacingAndGlyphs">149 ...</text>
<text x="994" y="1438" textLength="117.500" lengthAdjust="spacingAndGlyphs">1 / 21 requests</text>
<text x="1140" y="1438" textLength="210" lengthAdjust="spacingAndGlyphs">680 B / 51.1 kB transferred</text>
<text x="1378.500" y="1438" textLength="195.500" lengthAdjust="spacingAndGlyphs">419 B / 113 kB resources</text>
</g>
<path d="M1854 1070l6 9h-12z" fill="#9a9a9a"/>
<rect x="989.500" y="1104.500" width="15.500" height="19.500" fill="#fff"/>
<rect x="1582.500" y="1105" width="3" height="17" fill="#1a9fe0"/>

<!-- left/right divider of devtools -->
<path d="M977 698v760" stroke="#1f1f1f" stroke-width="1"/>

<!-- status bar -->
<path d="M2 1458H1876V1488a10 10 0 0 1-10 10H12a10 10 0 0 1-10-10z" fill="#3c3c3c"/>
<path d="M677 1433v65" stroke="#2e2e2e" stroke-width="1"/>
<text class="n" x="12" y="1480" font-size="18" fill="#999" textLength="72" lengthAdjust="spacingAndGlyphs">页面路径</text>
<path d="M92 1478h9l-4.500 6z" fill="#999"/>
<path d="M113 1470v21" stroke="#666" stroke-width="1"/>
<text class="n" x="125" y="1480" font-size="18" fill="#999" textLength="235" lengthAdjust="spacingAndGlyphs">pageFunc/pages/repair/index</text>
<path d="M375 1475h12v17h-12zM371 1488v-17h12" fill="none" stroke="#909090" stroke-width="1.700"/>
<g fill="none" stroke="#909090" stroke-width="1.600">
<ellipse cx="554.500" cy="1481" rx="6.500" ry="8.500"/><path d="M554.500 1473v16M549 1471l2 3M560 1471l-2 3M544 1475l5 3M565 1475l-5 3M543 1481h5M566 1481h-5M544 1488l5-3M565 1488l-5 3"/>
<path d="M593 1481c3-5 7-7 11-7s8 2 11 7c-3 5-7 7-11 7s-8-2-11-7z"/><circle cx="604" cy="1481" r="3.500"/>
</g>
<g fill="#909090"><circle cx="645" cy="1481" r="1.700"/><circle cx="652" cy="1481" r="1.700"/><circle cx="659" cy="1481" r="1.700"/></g>
<circle cx="710" cy="1480" r="8.500" fill="none" stroke="#8a8a8a" stroke-width="1.400"/><path d="M706 1476l8 8M714 1476l-8 8" stroke="#8a8a8a" stroke-width="1.400"/>
<text class="n" x="726" y="1480" font-size="18" fill="#8a8a8a">0</text>
<path d="M751 1471l9 17h-18z" fill="none" stroke="#8a8a8a" stroke-width="1.400"/><path d="M751 1477v6M751 1484v2" stroke="#8a8a8a" stroke-width="1.400"/>
<text class="n" x="766" y="1480" font-size="18" fill="#8a8a8a">0</text>
<g class="n" font-size="17.500" fill="#8a8a8a">
<text x="1477" y="1480" textLength="92" lengthAdjust="spacingAndGlyphs">行 40，列 3</text>
<text x="1594" y="1480" textLength="54" lengthAdjust="spacingAndGlyphs">空格: 2</text>
<text x="1673" y="1480" textLength="46.500" lengthAdjust="spacingAndGlyphs">UTF-8</text>
<text x="1745" y="1480" textLength="16" lengthAdjust="spacingAndGlyphs">LF</text>
<text x="1785" y="1480" textLength="79" lengthAdjust="spacingAndGlyphs">JavaScript</text>
</g>
</svg>
</body></html>
